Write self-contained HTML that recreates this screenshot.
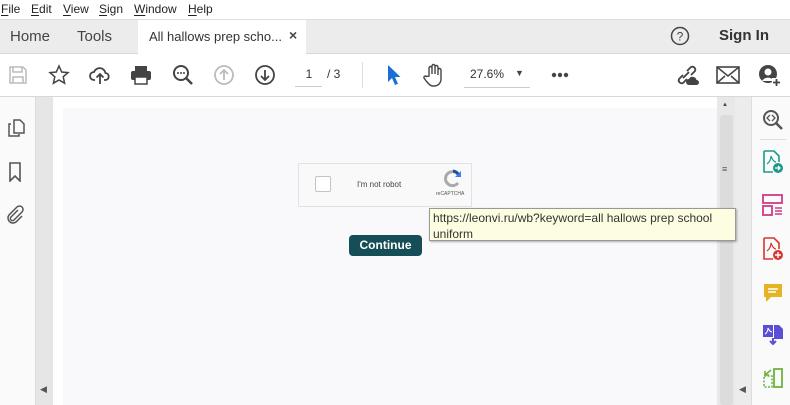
<!DOCTYPE html>
<html><head><style>
*{margin:0;padding:0;box-sizing:border-box}
body{width:790px;height:405px;overflow:hidden;background:#fff;font-family:"Liberation Sans",sans-serif;position:relative;color:#333}
.a{position:absolute}
.menu span{position:absolute;top:2px;font-size:12px;color:#222}
.menu u{text-decoration:underline;text-underline-offset:2px}
svg{position:absolute}
</style></head><body>
<div class="a menu" style="left:0;top:0;width:790px;height:19px;background:#fff">
<span style="left:1px"><u>F</u>ile</span><span style="left:31px"><u>E</u>dit</span><span style="left:63px"><u>V</u>iew</span><span style="left:99px"><u>S</u>ign</span><span style="left:134px"><u>W</u>indow</span><span style="left:188px"><u>H</u>elp</span>
</div>
<div class="a" style="left:0;top:19px;width:790px;height:35px;background:#ececec;border-top:1px solid #ddd;border-bottom:1px solid #d8d8d8"></div>
<div class="a" style="left:10px;top:28px;font-size:15px;color:#444">Home</div>
<div class="a" style="left:77px;top:28px;font-size:15px;color:#444">Tools</div>
<div class="a" style="left:138px;top:20px;width:168px;height:34px;background:#fff"></div>
<div class="a" style="left:149px;top:29px;font-size:13px;color:#333">All hallows prep scho...</div>
<div class="a" style="left:289px;top:27px;font-size:14px;color:#444;font-weight:bold">×</div>
<svg style="left:670px;top:26px" width="20" height="20" viewBox="0 0 20 20"><circle cx="10" cy="10" r="8.5" fill="none" stroke="#444" stroke-width="1.5"/><text x="10" y="14.5" font-size="12" text-anchor="middle" fill="#444" font-family="Liberation Sans">?</text></svg>
<div class="a" style="left:719px;top:27px;font-size:15px;font-weight:bold;color:#333">Sign In</div>
<div class="a" style="left:0;top:96px;width:790px;height:1px;background:#d8d8d8"></div>
<svg style="left:8px;top:65px" width="20" height="20" viewBox="0 0 20 20"><path d="M2 2h13l3 3v13H2z M5 2v5h9V2 M5 18v-6h10v6" fill="none" stroke="#bbb" stroke-width="1.5"/></svg>
<svg style="left:48px;top:64px" width="22" height="22" viewBox="0 0 22 22"><path d="M11 2l2.7 6 6.3.6-4.8 4.2 1.4 6.4L11 16l-5.6 3.2 1.4-6.4L2 8.6l6.3-.6z" fill="none" stroke="#444" stroke-width="1.5"/></svg>
<svg style="left:89px;top:64px" width="22" height="22" viewBox="0 0 22 22"><path d="M6 16H5a4 4 0 010-8 6 6 0 0111.5 1A3.5 3.5 0 0116 16h-1 M11 20V10 M7.5 13.5L11 10l3.5 3.5" fill="none" stroke="#444" stroke-width="1.8"/></svg>
<svg style="left:130px;top:64px" width="22" height="22" viewBox="0 0 22 22"><rect x="5" y="2" width="12" height="5" fill="#444"/><rect x="1" y="7" width="20" height="9" rx="2" fill="#444"/><rect x="5" y="13" width="12" height="7" fill="#fff" stroke="#444" stroke-width="1.5"/></svg>
<svg style="left:172px;top:64px" width="22" height="22" viewBox="0 0 22 22"><circle cx="9" cy="9" r="7" fill="none" stroke="#444" stroke-width="2"/><path d="M14 14l6 6" stroke="#444" stroke-width="2.5"/><circle cx="6" cy="9" r="1" fill="#444"/><circle cx="9" cy="9" r="1" fill="#444"/><circle cx="12" cy="9" r="1" fill="#444"/></svg>
<svg style="left:213px;top:64px" width="22" height="22" viewBox="0 0 22 22"><circle cx="11" cy="11" r="9" fill="none" stroke="#bbb" stroke-width="1.8"/><path d="M11 16V6M7 10l4-4 4 4" fill="none" stroke="#bbb" stroke-width="1.8"/></svg>
<svg style="left:254px;top:64px" width="22" height="22" viewBox="0 0 22 22"><circle cx="11" cy="11" r="9" fill="none" stroke="#444" stroke-width="1.8"/><path d="M11 6v10M7 12l4 4 4-4" fill="none" stroke="#444" stroke-width="1.8"/></svg>
<div class="a" style="left:296px;top:67px;font-size:12px;color:#333;width:26px;text-align:center">1</div>
<div class="a" style="left:295px;top:86px;width:27px;height:1px;background:#ccc"></div>
<div class="a" style="left:327px;top:67px;font-size:12px;color:#333">/ 3</div>
<div class="a" style="left:362px;top:62px;width:1px;height:26px;background:#ddd"></div>
<svg style="left:385px;top:64px" width="16" height="22" viewBox="0 0 16 22"><path d="M3 1v17l4-4 3 7 3-1.2-3-6.8h5.5z" fill="#1a6fd6"/></svg>
<svg style="left:422px;top:62px" width="24" height="26" viewBox="0 0 24 26"><path d="M7 14V6a1.5 1.5 0 013 0v6V4a1.5 1.5 0 013 0v8V5a1.5 1.5 0 013 0v8V8a1.5 1.5 0 013 0v9c0 4-3 7-7 7h-1c-3 0-4-2-6-4l-3-4a1.5 1.5 0 012.5-1.5z" fill="none" stroke="#444" stroke-width="1.4"/></svg>
<div class="a" style="left:470px;top:67px;font-size:12px;color:#333">27.6%</div>
<div class="a" style="left:515px;top:68px;font-size:9px;color:#444">▼</div>
<div class="a" style="left:464px;top:87px;width:66px;height:1px;background:#ccc"></div>
<svg style="left:551px;top:72px" width="18" height="6" viewBox="0 0 18 6"><circle cx="3" cy="3" r="2.2" fill="#444"/><circle cx="9" cy="3" r="2.2" fill="#444"/><circle cx="15" cy="3" r="2.2" fill="#444"/></svg>
<svg style="left:674px;top:63px" width="26" height="24" viewBox="0 0 26 24"><path d="M9 12l-4 4a3 3 0 004 4l4-4 M13 8l4-4a3 3 0 014 4l-4 4 M9 15l6-6" fill="none" stroke="#444" stroke-width="1.8"/><path d="M15 22a3 3 0 010-6 4 4 0 017.5 1 2.5 2.5 0 010 5z" fill="#444"/></svg>
<svg style="left:716px;top:66px" width="24" height="18" viewBox="0 0 24 18"><rect x="1" y="1" width="22" height="16" fill="none" stroke="#444" stroke-width="1.6"/><path d="M1 1l11 9 11-9 M1 17l8-7 M23 17l-8-7" fill="none" stroke="#444" stroke-width="1.5"/></svg>
<svg style="left:758px;top:64px" width="24" height="24" viewBox="0 0 24 24"><circle cx="10" cy="10" r="9" fill="#444"/><circle cx="10" cy="8" r="3.5" fill="#fff"/><path d="M4 17a7 7 0 0112 0" fill="#fff"/><rect x="14" y="14" width="9" height="9" fill="#fff"/><path d="M18.5 15v7M15 18.5h7" stroke="#444" stroke-width="1.8"/></svg>
<div class="a" style="left:0;top:97px;width:36px;height:308px;background:#fafafa;border-right:1px solid #ddd"></div>
<div class="a" style="left:36px;top:97px;width:17px;height:308px;background:#e6e6e6"></div>
<svg style="left:6px;top:118px" width="20" height="20" viewBox="0 0 20 20"><path d="M8 2h6l4 4v9H8z M5 6H3v12h10v-2" fill="none" stroke="#555" stroke-width="1.5"/></svg>
<svg style="left:8px;top:162px" width="14" height="20" viewBox="0 0 14 20"><path d="M2 1h10v18l-5-5-5 5z" fill="none" stroke="#555" stroke-width="1.6"/></svg>
<svg style="left:5px;top:204px" width="20" height="20" viewBox="0 0 20 20"><path d="M13 6l-7 7a2 2 0 003 3l8-8a3.5 3.5 0 00-5-5l-8 8a5 5 0 007 7l6-6" fill="none" stroke="#555" stroke-width="1.5"/></svg>
<div class="a" style="left:40px;top:384px;font-size:9px;color:#555">◀</div>
<div class="a" style="left:53px;top:97px;width:664px;height:308px;background:#fff"></div>
<div class="a" style="left:63px;top:108px;width:654px;height:297px;background:#f9f9fc"></div>
<div class="a" style="left:298px;top:163px;width:174px;height:44px;background:#f9f9f9;border:1px solid #e2e2e2"></div>
<div class="a" style="left:315px;top:176px;width:16px;height:16px;background:#fff;border:1px solid #c4c4c4;border-radius:2px"></div>
<div class="a" style="left:357px;top:180px;font-size:8px;color:#444">I'm not robot</div>
<svg style="left:443px;top:168px" width="20" height="20" viewBox="0 0 20 20"><path d="M16 8a7 7 0 10-1 7" fill="none" stroke="#aaa" stroke-width="3"/><path d="M10 3a7 7 0 016 5" fill="none" stroke="#1c4ca4" stroke-width="3"/><path d="M18 3v6h-6z" fill="#3e7fe0"/></svg>
<div class="a" style="left:436px;top:191px;font-size:5px;color:#555">reCAPTCHA</div>
<div class="a" style="left:349px;top:235px;width:73px;height:21px;background:#164e57;border-radius:4px;color:#fff;font-size:12px;font-weight:bold;text-align:center;line-height:21px">Continue</div>
<div class="a" style="left:717px;top:97px;width:18px;height:308px;background:#e8e8e8"></div>
<div class="a" style="left:720px;top:115px;width:13px;height:290px;background:#dcdcdc;border-radius:3px"></div>
<div class="a" style="left:722px;top:102px;font-size:6px;color:#444">▲</div>
<div class="a" style="left:722px;top:164px;font-size:9px;color:#555">≡</div>
<div class="a" style="left:735px;top:97px;width:17px;height:308px;background:#ececec;border-right:1px solid #ddd"></div>
<div class="a" style="left:739px;top:384px;font-size:9px;color:#555">◀</div>
<div class="a" style="left:429px;top:208px;width:307px;height:33px;background:#fdfde1;border:1px solid #999;box-shadow:1px 1px 2px rgba(0,0,0,.3);font-size:12px;color:#333;line-height:16px;padding:1px 3px;z-index:5">https://leonvi.ru/wb?keyword=all hallows prep school uniform</div>
<div class="a" style="left:752px;top:97px;width:38px;height:308px;background:#fafafa"></div>
<svg style="left:762px;top:109px" width="22" height="22" viewBox="0 0 22 22"><circle cx="9" cy="9" r="7" fill="none" stroke="#555" stroke-width="2"/><path d="M14 14l6 6" stroke="#555" stroke-width="2.5"/><path d="M8 6l-3 3 3 3M10 6l3 3-3 3" fill="none" stroke="#555" stroke-width="1.3"/></svg>
<div class="a" style="left:760px;top:139px;width:26px;height:1px;background:#ddd"></div>
<svg style="left:762px;top:150px" width="22" height="24" viewBox="0 0 22 24"><path d="M2 1h10l5 5v6 M2 1v21h9" fill="none" stroke="#1a9a8a" stroke-width="1.6"/><path d="M5 14c3-2 4-6 4-8 1 3 3 6 5 6" fill="none" stroke="#1a9a8a" stroke-width="1.2"/><circle cx="16" cy="18" r="5" fill="#1a9a8a"/><path d="M13 18h5M16 16l2 2-2 2" stroke="#fff" fill="none" stroke-width="1.3"/></svg>
<svg style="left:762px;top:194px" width="22" height="24" viewBox="0 0 22 24"><rect x="1" y="1" width="19" height="8" fill="none" stroke="#d03a8a" stroke-width="1.8"/><rect x="1" y="12" width="9" height="9" fill="none" stroke="#d03a8a" stroke-width="1.8"/><path d="M13 14h7M13 17h7M13 20h7" stroke="#d03a8a" stroke-width="1.4"/></svg>
<svg style="left:762px;top:237px" width="22" height="24" viewBox="0 0 22 24"><path d="M2 1h10l5 5v6 M2 1v21h9" fill="none" stroke="#d9352f" stroke-width="1.6"/><path d="M5 14c3-2 4-6 4-8 1 3 3 6 5 6" fill="none" stroke="#d9352f" stroke-width="1.2"/><circle cx="16" cy="18" r="5" fill="#d9352f"/><path d="M13 18h6M16 15v6" stroke="#fff" stroke-width="1.4"/></svg>
<svg style="left:762px;top:282px" width="22" height="22" viewBox="0 0 22 22"><path d="M2 2h18v13H9l-5 5v-5H2z" fill="#e6b325"/><path d="M6 7h10M6 10h8" stroke="#fff" stroke-width="1.5"/></svg>
<svg style="left:762px;top:323px" width="22" height="24" viewBox="0 0 22 24"><rect x="1" y="2" width="10" height="12" fill="#5a4fd6"/><path d="M12 2h5l4 4v10h-9z" fill="#5a4fd6"/><path d="M3 11c2-1 3-4 3-6 1 2 2 4 4 4" stroke="#fff" fill="none" stroke-width="1"/><path d="M11 15v6M8 18l3 3 3-3" stroke="#5a4fd6" stroke-width="2" fill="none"/></svg>
<svg style="left:762px;top:367px" width="22" height="22" viewBox="0 0 22 22"><rect x="12" y="2" width="8" height="18" fill="none" stroke="#6cb33e" stroke-width="1.8"/><rect x="2" y="9" width="8" height="11" fill="none" stroke="#6cb33e" stroke-width="1.5" stroke-dasharray="2 1.5"/><path d="M9 3L3 8M3 4v4h4" fill="none" stroke="#6cb33e" stroke-width="1.6"/></svg>
</body></html>
